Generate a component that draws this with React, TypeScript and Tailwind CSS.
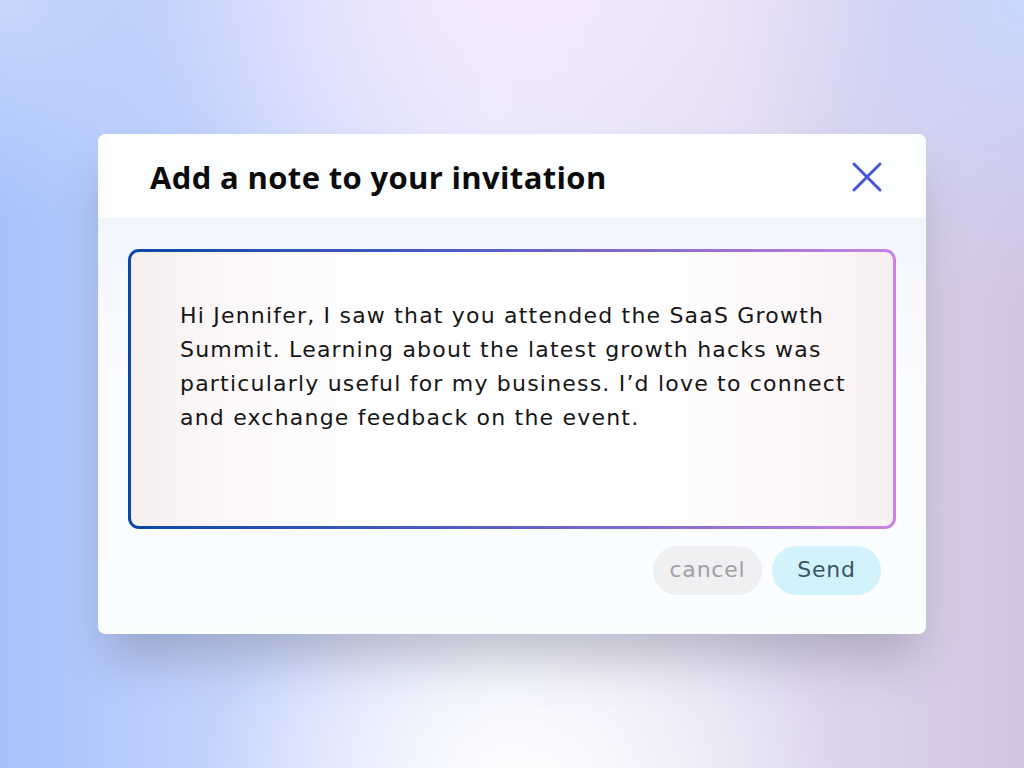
const NOTE_LINES = [
  'Hi Jennifer, I saw that you attended the SaaS Growth',
  'Summit. Learning about the latest growth hacks was',
  'particularly useful for my business. I’d love to connect',
  'and exchange feedback on the event.',
];

function CloseIcon() {
  return (
    <svg width="32" height="32" viewBox="0 0 32 32" fill="none">
      <path d="M3 3 L29 29 M29 3 L3 29" stroke="#4456d9" strokeWidth="3" strokeLinecap="round" />
    </svg>
  );
}

export default function App() {
  return (
    <div
      className="w-[1024px] h-[768px] overflow-hidden flex items-center justify-center bg-[radial-gradient(ellipse_320px_260px_at_520px_790px,#ffffff_0%,rgba(255,255,255,0)_100%),radial-gradient(ellipse_380px_280px_at_520px_-20px,#f6e9fd_0%,rgba(246,233,253,0)_100%),radial-gradient(ellipse_300px_300px_at_1024px_0px,#c9d8fd_0%,rgba(201,216,253,0)_100%),radial-gradient(ellipse_260px_220px_at_0px_0px,#c8d7fc_0%,rgba(200,215,252,0)_100%),linear-gradient(90deg,#a7c1fb_0%,#c8d6fd_25%,#e6eafd_48%,#e2def4_70%,#d3c5e2_100%)]"
      style={{ fontFamily: '"DejaVu Sans", "Liberation Sans", sans-serif' }}
    >
      <div className="w-[828px] h-[500px] rounded-[8px] overflow-hidden flex flex-col bg-[#fafdff] shadow-[0_32px_44px_-8px_rgba(80,80,95,0.3)]">
        <div className="h-[84px] shrink-0 flex items-center justify-between pl-[52px] pr-[43px] bg-[#fbfdff]">
          <h2 className="font-['Open_Sans',sans-serif] text-[31px] font-bold text-[#0c0c0c] tracking-[0.35px] leading-none pt-[2px]">
            Add a note to your invitation
          </h2>
          <button className="pt-[2px]">
            <CloseIcon />
          </button>
        </div>

        <div className="flex-1 flex flex-col px-[30px] pt-[31px] bg-[linear-gradient(180deg,#f2f5fc_0%,#f9fbfe_35%,#fbfeff_100%)]">
          <div className="h-[280px] rounded-[11px] p-[3px] bg-[linear-gradient(90deg,#0a48a8_0%,#4a5bc0_40%,#8a6cd2_70%,#c984e0_100%)]">
            <div className="h-full rounded-[8px] pl-[49px] pt-[47px] bg-[linear-gradient(90deg,#f5efef_0%,#fcf8f9_12%,#ffffff_35%,#ffffff_65%,#fcf7f8_88%,#f7f0f0_100%)]">
              <p className="text-[22px] leading-[34px] tracking-[1.2px] text-[#161616]">
                {NOTE_LINES.map(line => (
                  <span key={line} className="block whitespace-nowrap">{line}</span>
                ))}
              </p>
            </div>
          </div>

          <div className="flex justify-end gap-[10px] mt-[17px] pr-[15px]">
            <button className="w-[109px] h-[49px] rounded-full bg-[#f0eff2] text-[22px] tracking-[0.8px] text-[#a0a0a4] pb-[2px]">
              cancel
            </button>
            <button className="w-[109px] h-[49px] rounded-full bg-[#d2f3fc] text-[22px] tracking-[0.8px] text-[#3c5466] pb-[2px]">
              Send
            </button>
          </div>
        </div>
      </div>
    </div>
  );
}
